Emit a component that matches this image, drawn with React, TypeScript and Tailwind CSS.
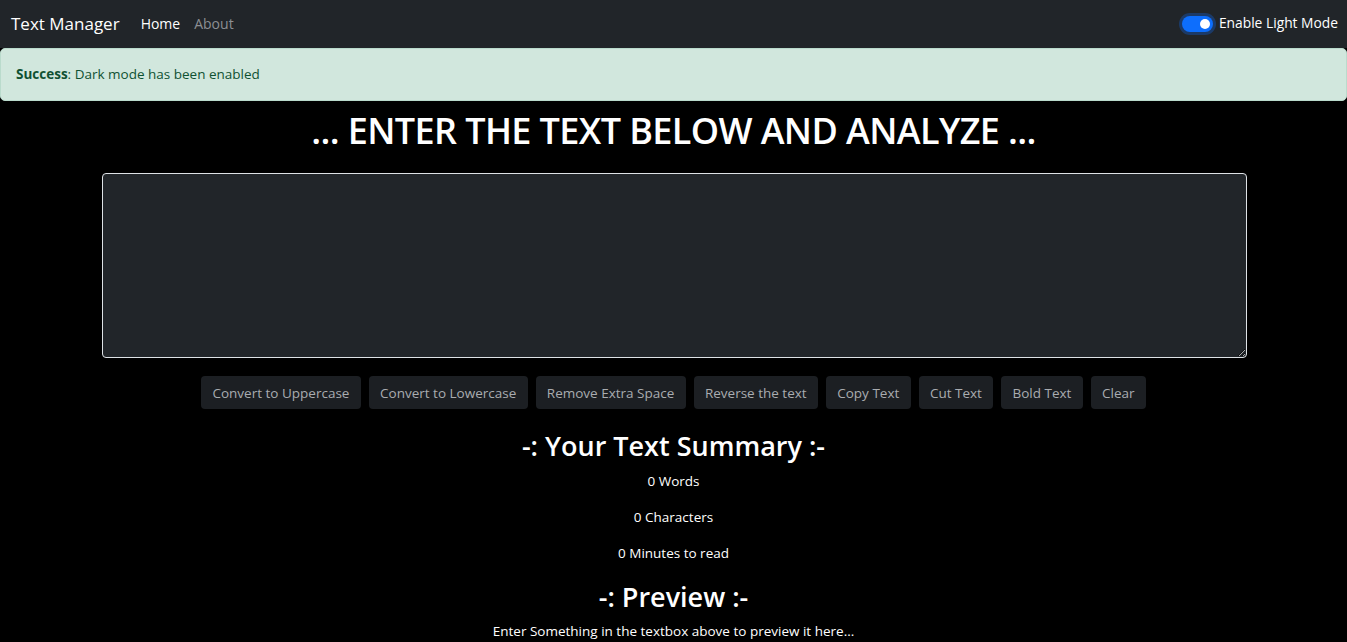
import { useState } from 'react';

const actions = [
  'Convert to Uppercase',
  'Convert to Lowercase',
  'Remove Extra Space',
  'Reverse the text',
  'Copy Text',
  'Cut Text',
  'Bold Text',
  'Clear',
];

export default function App() {
  const [text, setText] = useState('');
  const words = text.split(/\s+/).filter((w) => w.length > 0).length;

  return (
    <div className="min-h-[642px] bg-black font-['Open_Sans',sans-serif] text-white">
      {/* Navbar */}
      <nav className="flex h-12 items-center justify-between bg-[#212529] pl-[11px] pr-[9px]">
        <div className="flex items-center pb-px">
          <span className="text-[17px] text-white">Text Manager</span>
          <span className="ml-[21px] text-[14px] text-white">Home</span>
          <span className="ml-[14px] text-[14px] text-[#8c8f93]">About</span>
        </div>
        <div className="flex items-center gap-[6px] pb-px">
          <div className="flex h-[16px] w-[31px] items-center justify-end rounded-full bg-[#0d6efd] pr-[3px] shadow-[0_0_0_3px_rgba(13,110,253,0.3)]">
            <div className="h-[10px] w-[10px] rounded-full bg-white" />
          </div>
          <span className="text-[13.8px] text-white">Enable Light Mode</span>
        </div>
      </nav>

      {/* Alert */}
      <div className="flex h-[53px] items-center rounded-[5px] border border-[#badbcc] bg-[#d1e7dd] px-[15px] text-[13.5px] text-[#0f5132]">
        <strong className="font-bold">Success</strong>: Dark mode has been enabled
      </div>

      <div className="flex flex-col items-center">
        <h1 className="mt-[6px] text-[36px] font-semibold leading-[48px] tracking-[-0.6px]">
          ... ENTER THE TEXT BELOW AND ANALYZE ...
        </h1>
        <textarea
          value={text}
          onChange={(e) => setText(e.target.value)}
          className="ml-px mt-[18px] h-[185px] w-[1145px] resize-y rounded-[4px] border border-[#dee2e6] bg-[#212529] p-3 text-white outline-none"
        />
        <div className="mt-[18px] flex gap-[8px]">
          {actions.map((a) => (
            <button
              key={a}
              className="h-[33px] rounded-[4px] bg-[#1c1f23] px-[11.3px] pt-px text-[13.5px] text-[#a9acb0]"
            >
              {a}
            </button>
          ))}
        </div>

        <h2 className="mt-[21px] text-[27px] font-semibold leading-[1.2]">-: Your Text Summary :-</h2>
        <p className="mt-[9px] text-[13.5px]">{words} Words</p>
        <p className="mt-[15px] text-[13.5px]">{text.length} Characters</p>
        <p className="mt-[16px] text-[13.5px]">{0.008 * words} Minutes to read</p>
        <h2 className="mt-[18px] text-[27px] font-semibold leading-[1.2]">-: Preview :-</h2>
        <p className="mt-[7px] text-[13.5px]">
          {text.length > 0 ? text : 'Enter Something in the textbox above to preview it here...'}
        </p>
      </div>
    </div>
  );
}
